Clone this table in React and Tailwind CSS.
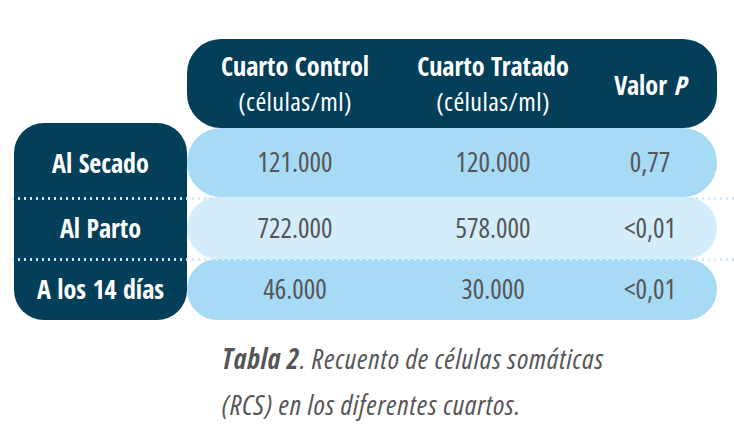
import React from "react";

const rows = [
  { label: "Al Secado", control: "121.000", tratado: "120.000", p: "0,77", bg: "bg-[#a6daf5]", h: "h-[69px]" },
  { label: "Al Parto", control: "722.000", tratado: "578.000", p: "<0,01", bg: "bg-[#d4edfa]", h: "h-[62px]" },
  { label: "A los 14 días", control: "46.000", tratado: "30.000", p: "<0,01", bg: "bg-[#a6daf5]", h: "h-[61px]" },
];

// regular weight: Open Sans through its condensed face
const thin = "font-['Open_Sans','Roboto_Condensed',sans-serif] font-normal font-stretch-[75%]";

function Dots({ top }) {
  // dotted separator that crosses the label column and the rows
  return (
    <div
      className={`absolute left-[10px] right-0 h-[3px] bg-[radial-gradient(circle,#cfeaf8_1.1px,transparent_1.4px)] bg-[length:6px_3px] ${top}`}
    />
  );
}

export default function App() {
  return (
    <div className="relative w-[734px] h-[440px] bg-white overflow-hidden font-['Open_Sans_Condensed','Roboto_Condensed',sans-serif]">
      {/* header */}
      <div className="ml-[187px] mt-[39px] w-[530px] h-[89px] rounded-[34px] bg-[#043f59] flex items-center text-white">
        <div className="w-[216px] text-center leading-[35px]">
          <div className="text-[26px] font-bold">Cuarto Control</div>
          <div className={`text-[26px] tracking-[0.4px] ${thin}`}>(células/ml)</div>
        </div>
        <div className="w-[180px] text-center leading-[35px]">
          <div className="text-[26px] font-bold">Cuarto Tratado</div>
          <div className={`text-[26px] tracking-[0.4px] ${thin}`}>(células/ml)</div>
        </div>
        <div className="w-[134px] text-center text-[26px] font-bold pt-[3px]">
          Valor <span className="italic">P</span>
        </div>
      </div>

      {/* body */}
      <div className="flex -mt-[5px]">
        <div className="ml-[14px] w-[173px] rounded-[30px] bg-[#043f59] text-white text-[26px] font-bold flex flex-col">
          <div className="h-[75px] flex items-center justify-center pt-[5px]">{rows[0].label}</div>
          <div className="h-[61px] flex items-center justify-center">{rows[1].label}</div>
          <div className="h-[61px] flex items-center justify-center">{rows[2].label}</div>
        </div>
        <div className="pt-[5px] w-[530px] flex flex-col">
          {rows.map((r) => (
            <div key={r.label} className={`${r.h} ${r.bg} rounded-[34px] flex items-center text-[27px] text-[#555557] ${thin}`}>
              <div className="w-[216px] text-center">{r.control}</div>
              <div className="w-[180px] text-center">{r.tratado}</div>
              <div className="w-[134px] text-center">{r.p}</div>
            </div>
          ))}
        </div>
      </div>

      <Dots top="top-[197px]" />
      <Dots top="top-[258px]" />

      {/* caption */}
      <div className={`ml-[222px] mt-[15px] text-[28px] italic tracking-[0.8px] text-[#555557] leading-[46px] ${thin}`}>
        <div>
          <span className="font-bold">Tabla 2</span>. Recuento de células somáticas
        </div>
        <div>(RCS) en los diferentes cuartos.</div>
      </div>
    </div>
  );
}
